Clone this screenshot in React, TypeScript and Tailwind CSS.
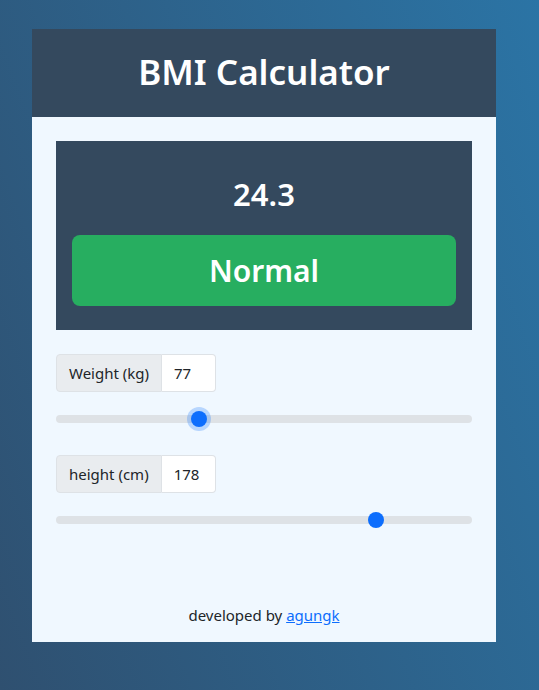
import React, { useState } from 'react'

const font = { fontFamily: '"Noto Sans", "Open Sans", sans-serif' }

const RangeRow = ({
  label,
  value,
  min,
  max,
  onChange,
  focused = false,
}: {
  label: string
  value: number
  min: number
  max: number
  onChange: (v: number) => void
  focused?: boolean
}) => {
  const pct = (value - min) / (max - min)
  return (
    <div className="flex flex-col">
      <div className="flex h-[38px] w-fit">
        <span className="flex items-center px-3 bg-[#e9ecef] border border-[#dee2e6] rounded-l-[4px] text-[15px] text-[#212529]">
          {label}
        </span>
        <input
          type="text"
          value={value}
          onChange={(e) => onChange(Number(e.target.value) || 0)}
          className="w-[54px] px-3 bg-white border border-l-0 border-[#dee2e6] rounded-r-[4px] text-[15px] text-[#212529] outline-none"
        />
      </div>
      <div className="relative h-6 mt-[15px]">
        <div className="absolute left-0 right-0 top-2 h-2 rounded-full bg-[#dee2e6]" />
        <div
          className={`absolute top-1 w-4 h-4 rounded-full bg-[#0d6efd] ${
            focused ? 'shadow-[0_0_0_4px_rgba(13,110,253,0.25)]' : ''
          }`}
          style={{ left: `calc(${pct} * (100% - 16px))` }}
        />
      </div>
    </div>
  )
}

const App = () => {
  const [weight, setWeight] = useState(77)
  const [height, setHeight] = useState(178)
  const bmi = weight / Math.pow(height / 100, 2)

  return (
    <div
      className="min-h-[690px] w-full bg-[linear-gradient(70deg,#2f5070,#2b74a5)] pt-[29px] pb-[48px]"
      style={font}
    >
      <div className="ml-[32px] w-[464px] flex flex-col">
        <div className="h-[88px] bg-[#34495e] flex items-center justify-center">
          <h1 className="text-[35px] font-semibold text-white leading-none -mt-1">BMI Calculator</h1>
        </div>
        <div className="bg-[#f0f8ff] px-6 pt-6 pb-[15px] flex flex-col">
          <div className="bg-[#34495e] h-[189px] px-4 flex flex-col">
            <div className="h-[94px] pt-3 flex items-center justify-center">
              <span className="text-[31px] font-semibold text-white">{bmi.toFixed(1)}</span>
            </div>
            <div className="h-[71px] rounded-[8px] bg-[#27ae60] flex items-center justify-center">
              <span className="text-[30px] font-semibold text-white">Normal</span>
            </div>
          </div>
          <div className="mt-6 flex flex-col gap-6">
            <RangeRow label="Weight (kg)" value={weight} min={40} max={150} onChange={setWeight} focused />
            <RangeRow label="height (cm)" value={height} min={100} max={200} onChange={setHeight} />
          </div>
          <p className="mt-[71px] text-center text-[15px] leading-6 text-[#212529]">
            developed by{' '}
            <a href="#" className="text-[#0d6efd] underline">
              agungk
            </a>
          </p>
        </div>
      </div>
    </div>
  )
}

export default App
